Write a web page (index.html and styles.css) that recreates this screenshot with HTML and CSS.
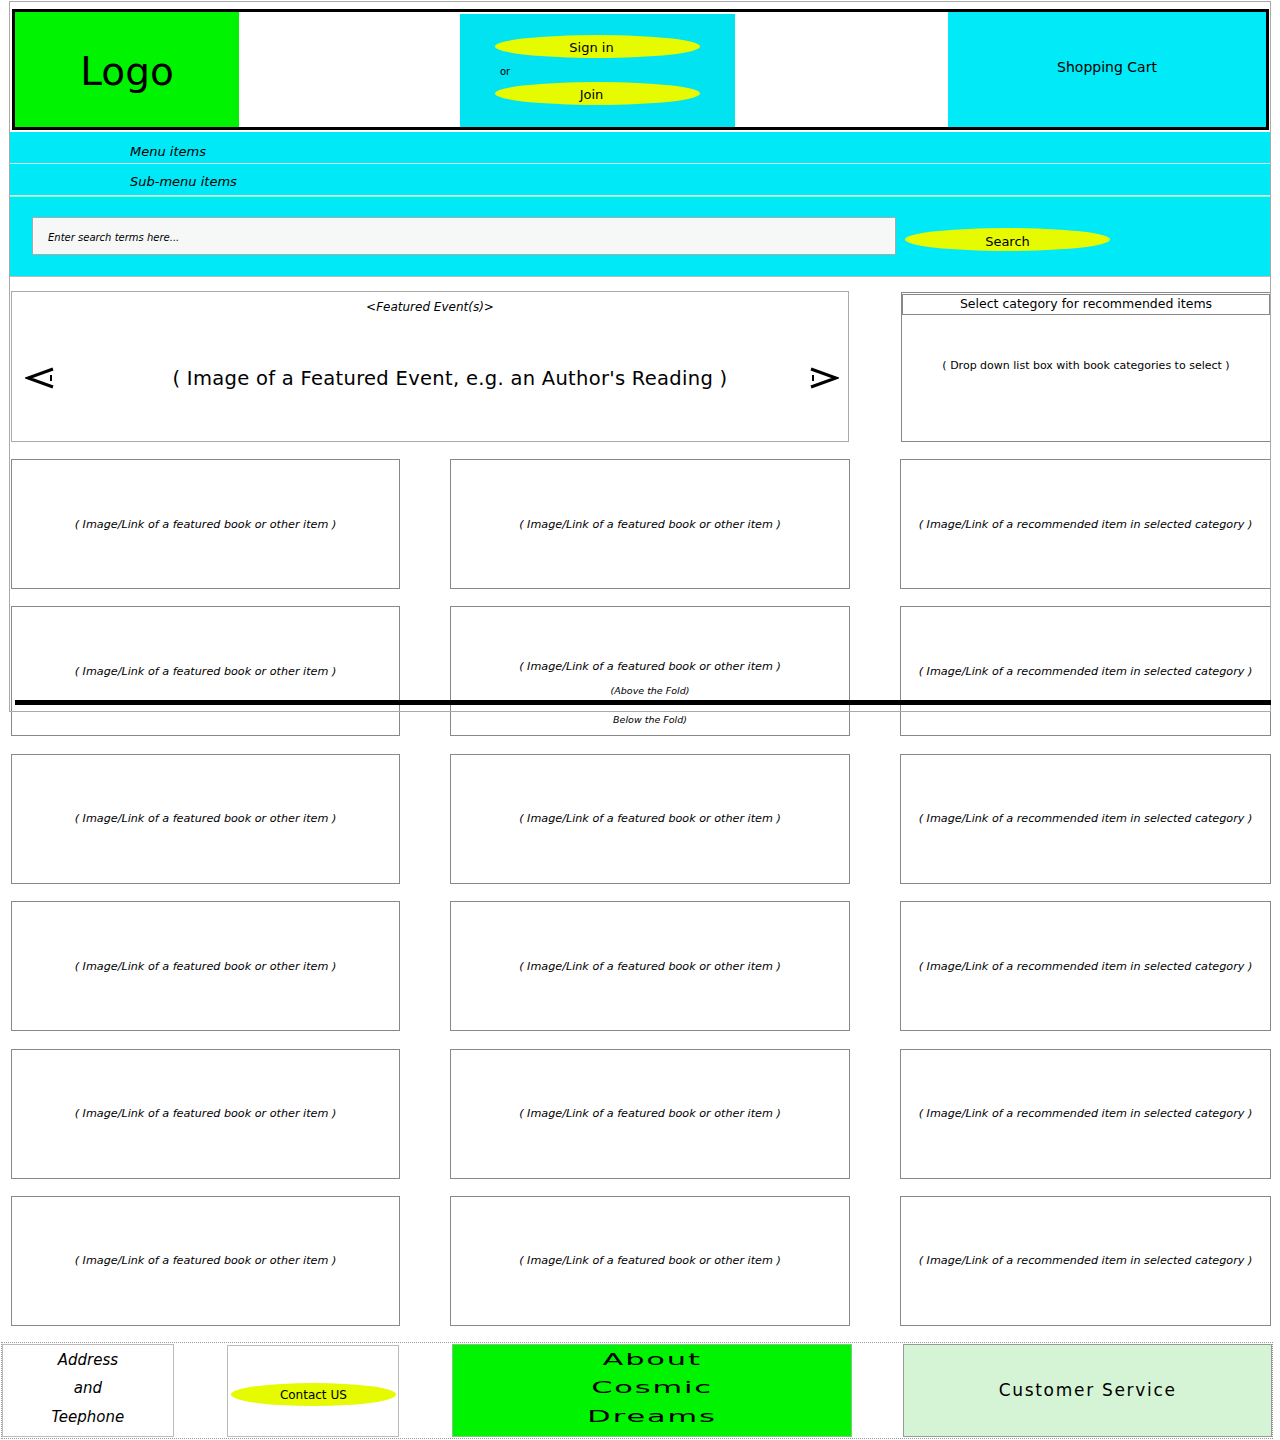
FILE: index.html
```html
<!DOCTYPE html>
<html lang="en">
<head>
<meta charset="utf-8">
<title>Cosmic Dreams - Wireframe</title>
<link rel="stylesheet" href="styles.css">
</head>
<body>
<div class="page">
  <header class="masthead">
    <div class="logo">Logo</div>
    <div class="spacer-a"></div>
    <div class="account">
      <div class="pill pill-sign">Sign in</div>
      <div class="or">or</div>
      <div class="pill pill-join">Join</div>
    </div>
    <div class="spacer-b"></div>
    <div class="cart">Shopping Cart</div>
  </header>

  <nav class="menus">
    <div class="menu-row">Menu items</div>
    <div class="menu-row">Sub-menu items</div>
  </nav>

  <div class="search-band">
    <div class="search-input">Enter search terms here...</div>
    <div class="pill pill-search">Search</div>
  </div>

  <section class="feature-row">
    <div class="featured">
      <div class="featured-title">&lt;Featured Event(s)&gt;</div>
      <div class="featured-body">
        <svg class="arrow" width="30" height="24" viewBox="0 0 30 24"><path d="M28 3 L3 12 L28 21" fill="none" stroke="#000" stroke-width="3"/><path d="M26 9 L26 15" stroke="#000" stroke-width="2"/></svg>
        <span class="featured-text">( Image of a Featured Event, e.g. an Author's Reading )</span>
        <svg class="arrow" width="30" height="24" viewBox="0 0 30 24"><path d="M2 3 L27 12 L2 21" fill="none" stroke="#000" stroke-width="3"/><path d="M4 9 L4 15" stroke="#000" stroke-width="2"/></svg>
      </div>
    </div>
    <div class="category">
      <div class="category-head">Select category for recommended items</div>
      <div class="category-body">( Drop down list box with book categories to select )</div>
    </div>
  </section>

  <section class="grid">
    <div class="cell">( Image/Link of a featured book or other item )</div>
    <div class="cell">( Image/Link of a featured book or other item )</div>
    <div class="cell rec">( Image/Link of a recommended item in selected category )</div>

    <div class="cell">( Image/Link of a featured book or other item )</div>
    <div class="cell fold-cell">
      <span class="fold-main">( Image/Link of a featured book or other item )</span>
      <span class="fold-note">(Above the Fold)</span>
      <span class="fold-note fold-below">Below the Fold)</span>
    </div>
    <div class="cell rec">( Image/Link of a recommended item in selected category )</div>

    <div class="cell">( Image/Link of a featured book or other item )</div>
    <div class="cell">( Image/Link of a featured book or other item )</div>
    <div class="cell rec">( Image/Link of a recommended item in selected category )</div>

    <div class="cell">( Image/Link of a featured book or other item )</div>
    <div class="cell">( Image/Link of a featured book or other item )</div>
    <div class="cell rec">( Image/Link of a recommended item in selected category )</div>

    <div class="cell">( Image/Link of a featured book or other item )</div>
    <div class="cell">( Image/Link of a featured book or other item )</div>
    <div class="cell rec">( Image/Link of a recommended item in selected category )</div>

    <div class="cell">( Image/Link of a featured book or other item )</div>
    <div class="cell">( Image/Link of a featured book or other item )</div>
    <div class="cell rec">( Image/Link of a recommended item in selected category )</div>
  </section>

  <footer class="footer">
    <div class="address"><span>Address</span><span>and</span><span>Teephone</span></div>
    <div class="contact"><div class="pill pill-contact">Contact US</div></div>
    <div class="about"><span>About</span><span>Cosmic</span><span>Dreams</span></div>
    <div class="service">Customer Service</div>
  </footer>

  <div class="fold-frame"></div>
  <div class="fold-line"></div>
</div>
</body>
</html>
```

FILE: styles.css
```css
* { box-sizing: border-box; }
html, body { margin: 0; padding: 0; background: #fff; }
body {
  font-family: "DejaVu Sans", Verdana, sans-serif;
  color: #000;
  width: 1280px;
  height: 1440px;
  overflow: hidden;
}
.page { position: relative; width: 1280px; height: 1440px; padding-top: 9px; }

/* header */
.masthead {
  display: flex;
  margin-left: 12px;
  width: 1257px;
  height: 121px;
  border: 3px solid #000;
  background: #fff;
}
.logo {
  width: 224px;
  background: #00f300;
  display: flex;
  align-items: center;
  justify-content: center;
  font-size: 39px;
  padding-top: 3px;
}
.spacer-a { width: 221px; }
.account {
  width: 275px;
  margin-top: 2px;
  height: 113px;
  background: #02e3f2;
  display: flex;
  flex-direction: column;
  padding: 21px 0 0 35px;
}
.pill {
  background: #e6fa00;
  border-radius: 50%;
  display: flex;
  align-items: center;
  justify-content: center;
  font-size: 13px;
  padding-top: 1px;
}
.pill-sign, .pill-join { width: 205px; height: 23px; padding-right: 12px; }
.or { font-size: 10px; padding: 8px 0 0 5px; height: 24px; }
.spacer-b { width: 213px; }
.cart {
  flex: 1;
  background: #00eaf7;
  display: flex;
  align-items: center;
  justify-content: center;
  font-size: 14px;
  padding-bottom: 6px;
}

/* menus */
.menus { margin: 2px 0 0 9px; width: 1261px; }
.menu-row {
  height: 32px;
  background: #00e9f7;
  border-bottom: 1px solid #d8f0f2;
  font-style: italic;
  font-size: 13px;
  padding: 12px 0 0 121px;
}
.menu-row + .menu-row { height: 32px; padding-top: 10px; }

/* search */
.search-band {
  margin-left: 9px;
  width: 1262px;
  height: 81px;
  background: #00e9f7;
  border-top: 1px solid #8fb;
  border-bottom: 1px solid #bbb;
  display: flex;
  align-items: flex-start;
  padding: 20px 0 0 23px;
}
.search-input {
  width: 864px;
  height: 38px;
  background: #f6f8f8;
  border: 1px solid #aaa;
  font-size: 10px;
  font-style: italic;
  display: flex;
  align-items: center;
  padding: 3px 0 0 15px;
}
.pill-search { width: 205px; height: 23px; margin: 11px 0 0 9px; padding-top: 3px; }

/* featured */
.feature-row {
  display: flex;
  margin: 14px 0 0 11px;
  height: 151px;
}
.featured {
  width: 838px;
  border: 1.5px solid #aaa;
  display: flex;
  flex-direction: column;
}
.featured-title {
  text-align: center;
  font-style: italic;
  font-size: 12px;
  padding-top: 8px;
}
.featured-body {
  display: flex;
  align-items: center;
  justify-content: space-between;
  padding: 52px 9px 0 13px;
}
.featured-text { font-size: 19.5px; letter-spacing: 0.3px; margin-left: 36px; }
.category {
  width: 370px;
  margin: 1px 0 0 52px;
  height: 150px;
  border: 1px solid #888;
  display: flex;
  flex-direction: column;
}
.category-head {
  margin: 1px 0 0 0;
  height: 21px;
  border: 1px solid #888;
  font-size: 12.5px;
  text-align: center;
  padding-top: 1px;
}
.category-body {
  font-size: 11px;
  text-align: center;
  padding-top: 44px;
}

/* grid */
.grid {
  display: grid;
  grid-template-columns: 389px 400px 371px;
  grid-auto-rows: 130px;
  column-gap: 50px;
  row-gap: 17.4px;
  margin: 17px 0 0 11px;
}
.cell {
  border: 1px solid #888;
  display: flex;
  align-items: center;
  justify-content: center;
  font-style: italic;
  font-size: 11.2px;
  background: #fff;
}
.fold-cell {
  flex-direction: column;
  justify-content: flex-start;
  padding-top: 53px;
}
.fold-note { font-size: 9.5px; margin-top: 12px; }
.fold-below { margin-top: 18px; }

/* footer */
.footer {
  display: flex;
  margin: 16px 0 0 1px;
  width: 1272px;
  height: 97px;
  border: 1.5px dotted #999;
  padding: 1px 0 1px 0;
}
.address {
  width: 172px;
  border: 1px solid #bbb;
  display: flex;
  flex-direction: column;
  align-items: center;
  font-style: italic;
  font-size: 15px;
  line-height: 28.5px;
  padding-top: 1px;
}
.contact {
  width: 172px;
  margin: 1px 0 0 53px;
  border: 1px solid #bbb;
  display: flex;
  align-items: center;
  padding: 8px 0 0 3px;
}
.pill-contact { width: 165px; height: 23px; font-size: 12px; }
.about {
  width: 401px;
  margin-left: 53px;
  background: #00f300;
  border: 1px solid #7c7;
  display: flex;
  flex-direction: column;
  align-items: center;
  font-size: 16px;
  letter-spacing: 1px;
  line-height: 28.5px;
  padding-top: 1px;
}
.about span { display: inline-block; transform: scaleX(1.9); }
.service {
  width: 369px;
  margin-left: 51px;
  background: #d5f4d5;
  border: 1px solid #999;
  display: flex;
  align-items: center;
  justify-content: center;
  font-size: 17px;
  letter-spacing: 1.7px;
}

/* overlays */
.fold-frame {
  position: absolute;
  left: 9px;
  top: 1px;
  width: 1262px;
  height: 711px;
  border: 1px solid #aaa;
  pointer-events: none;
}
.fold-line {
  position: absolute;
  left: 15px;
  top: 700px;
  width: 1256px;
  height: 5px;
  background: #000;
}
```
